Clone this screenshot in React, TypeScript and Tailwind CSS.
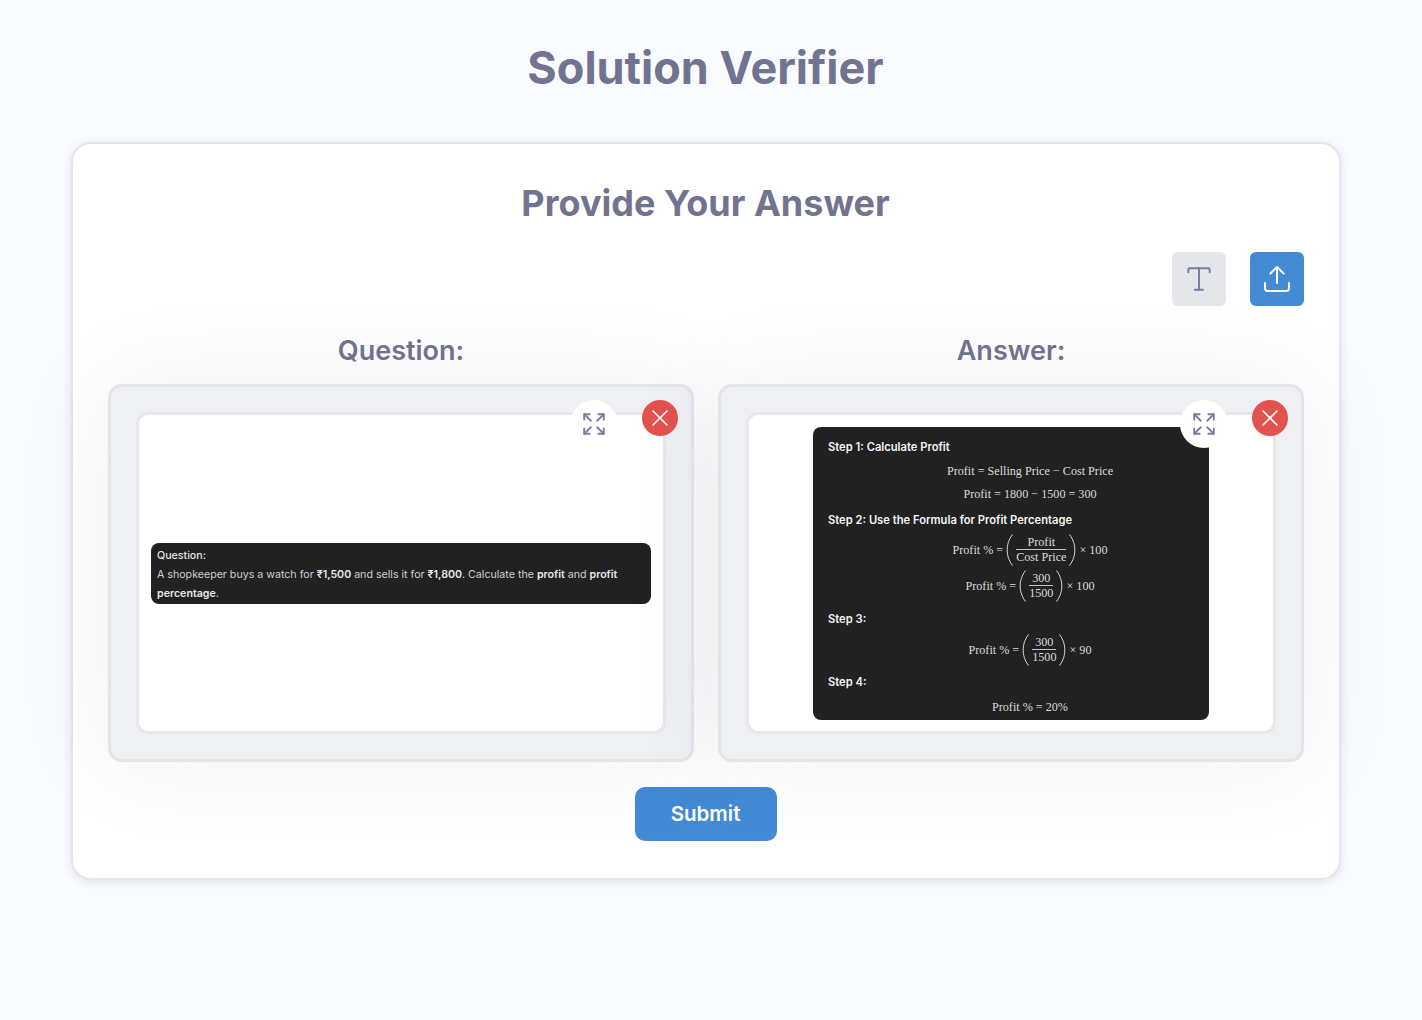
import { Expand, Type, Upload, X } from 'lucide-react'

const Paren = ({ side }: { side: 'l' | 'r' }) => (
  <svg width="7" height="32" viewBox="0 0 7 32" className="shrink-0" fill="none" stroke="#dcdcdc" strokeWidth="1">
    <path d={side === 'l' ? 'M6.5 .5C2.5 6 1.2 11 1.2 16s1.3 10 5.3 15.5' : 'M.5 .5C4.5 6 5.8 11 5.8 16s-1.3 10-5.3 15.5'} />
  </svg>
)

const Frac = ({ top, bottom }: { top: string; bottom: string }) => (
  <span className="flex flex-col items-stretch text-center">
    <span className="leading-[14px] border-b border-[#c4c4c4]">{top}</span>
    <span className="leading-[15px]">{bottom}</span>
  </span>
)

const Step = ({ children, className = '' }: { children: string; className?: string }) => (
  <div className={`h-5 flex items-center font-semibold text-[11.2px] text-[#f4f4f4] ${className}`}>{children}</div>
)

const Formula = ({ children, className = '' }: { children: React.ReactNode; className?: string }) => (
  <div className={`pl-[38px] pb-[1px] flex items-center justify-center gap-[3px] whitespace-pre text-[12.15px] text-[#dcdcdc] font-['Liberation_Serif',serif] ${className}`}>
    {children}
  </div>
)

const Panel = ({ children }: { children: React.ReactNode }) => (
  <div className="relative h-[378px] rounded-[14px] border-[3px] border-[#e3e5ea] bg-[#eff0f3] p-[25px] shadow-[0_0_100px_rgba(60,60,90,0.08)]">
    <div className="h-full rounded-[12px] border-[3px] border-[#e6e8ec] bg-white flex items-center justify-center overflow-hidden">
      {children}
    </div>
    <button className="absolute top-[13px] right-[73px] w-12 h-12 rounded-full bg-white flex items-center justify-center text-[#7b7b9b]">
      <Expand size={26} strokeWidth={1.7} />
    </button>
    <button className="absolute top-[13px] right-[13px] w-9 h-9 rounded-full bg-[#e2534f] flex items-center justify-center text-white">
      <X size={28} strokeWidth={1.4} />
    </button>
  </div>
)

export default function App() {
  return (
    <div className="min-h-[1020px] bg-[#f9fbff] font-['Inter',sans-serif] pr-[10px] overflow-hidden">
      <h1 className="pt-[38px] pr-[1px] h-[142px] text-center text-[45px] leading-[60px] font-bold text-[#717391]">Solution Verifier</h1>
      <div className="mx-[71px] h-[738px] rounded-[20px] border-2 border-[#e4e6eb] bg-white px-[35px] pt-[35px] shadow-[0_2px_10px_rgba(60,60,90,0.12)]">
        <h2 className="pr-[1px] text-center text-[36px] leading-[48px] font-bold text-[#717391]">Provide Your Answer</h2>
        <div className="mt-[25px] flex justify-end gap-6">
          <button className="w-[54px] h-[54px] rounded-md bg-[#e5e6ea] flex items-center justify-center text-[#7b7b9b]">
            <Type size={32} strokeWidth={1.5} />
          </button>
          <button className="w-[54px] h-[54px] rounded-md bg-[#448ad5] flex items-center justify-center text-white">
            <Upload size={32} strokeWidth={1.5} />
          </button>
        </div>
        <div className="mt-[26px] grid grid-cols-2 gap-6">
          <div>
            <h3 className="h-[52px] pt-[1px] text-center text-[27px] leading-9 font-semibold text-[#717391]">Question:</h3>
            <Panel>
              <div className="w-[500px] h-[61px] rounded-lg bg-[#212121] px-[6px] py-[3px] text-[10.65px] leading-[19px] text-[#cfcfcf]">
                <div className="font-medium text-[#e4e4e4]">Question:</div>
                <div>
                  A shopkeeper buys a watch for <b className="font-semibold text-[#e8e8e8]">₹1,500</b> and sells it for{' '}
                  <b className="font-semibold text-[#e8e8e8]">₹1,800</b>. Calculate the <b className="font-semibold text-[#e8e8e8]">profit</b> and{' '}
                  <b className="font-semibold text-[#e8e8e8]">profit</b>
                  <br />
                  <b className="font-semibold text-[#e8e8e8]">percentage</b>.
                </div>
              </div>
            </Panel>
          </div>
          <div>
            <h3 className="h-[52px] pt-[1px] text-center text-[27px] leading-9 font-semibold text-[#717391]">Answer:</h3>
            <Panel>
              <div className="w-[396px] h-[293px] rounded-lg bg-[#212121] px-[15px] pt-[11px]">
                <Step>Step 1: Calculate Profit</Step>
                <Formula className="mt-[2px] h-6">Profit = Selling Price − Cost Price</Formula>
                <Formula className="h-[23px]">Profit = 1800 − 1500 = 300</Formula>
                <Step className="mt-1">Step 2: Use the Formula for Profit Percentage</Step>
                <Formula className="mt-[2px] h-9">
                  Profit % =
                  <Paren side="l" />
                  <Frac top="Profit" bottom="Cost Price" />
                  <Paren side="r" />
                  × 100
                </Formula>
                <Formula className="h-9">
                  Profit % =
                  <Paren side="l" />
                  <Frac top="300" bottom="1500" />
                  <Paren side="r" />
                  × 100
                </Formula>
                <Step className="mt-[5px]">Step 3:</Step>
                <Formula className="mt-[3px] h-9">
                  Profit % =
                  <Paren side="l" />
                  <Frac top="300" bottom="1500" />
                  <Paren side="r" />
                  × 90
                </Formula>
                <Step className="mt-1">Step 4:</Step>
                <Formula className="mt-[3px] h-6">Profit % = 20%</Formula>
              </div>
            </Panel>
          </div>
        </div>
        <div className="mt-[25px] flex justify-center">
          <button className="w-[142px] h-[54px] rounded-[10px] bg-[#448ad5] text-white text-[20.5px] font-semibold pr-[1px]">Submit</button>
        </div>
      </div>
    </div>
  )
}
